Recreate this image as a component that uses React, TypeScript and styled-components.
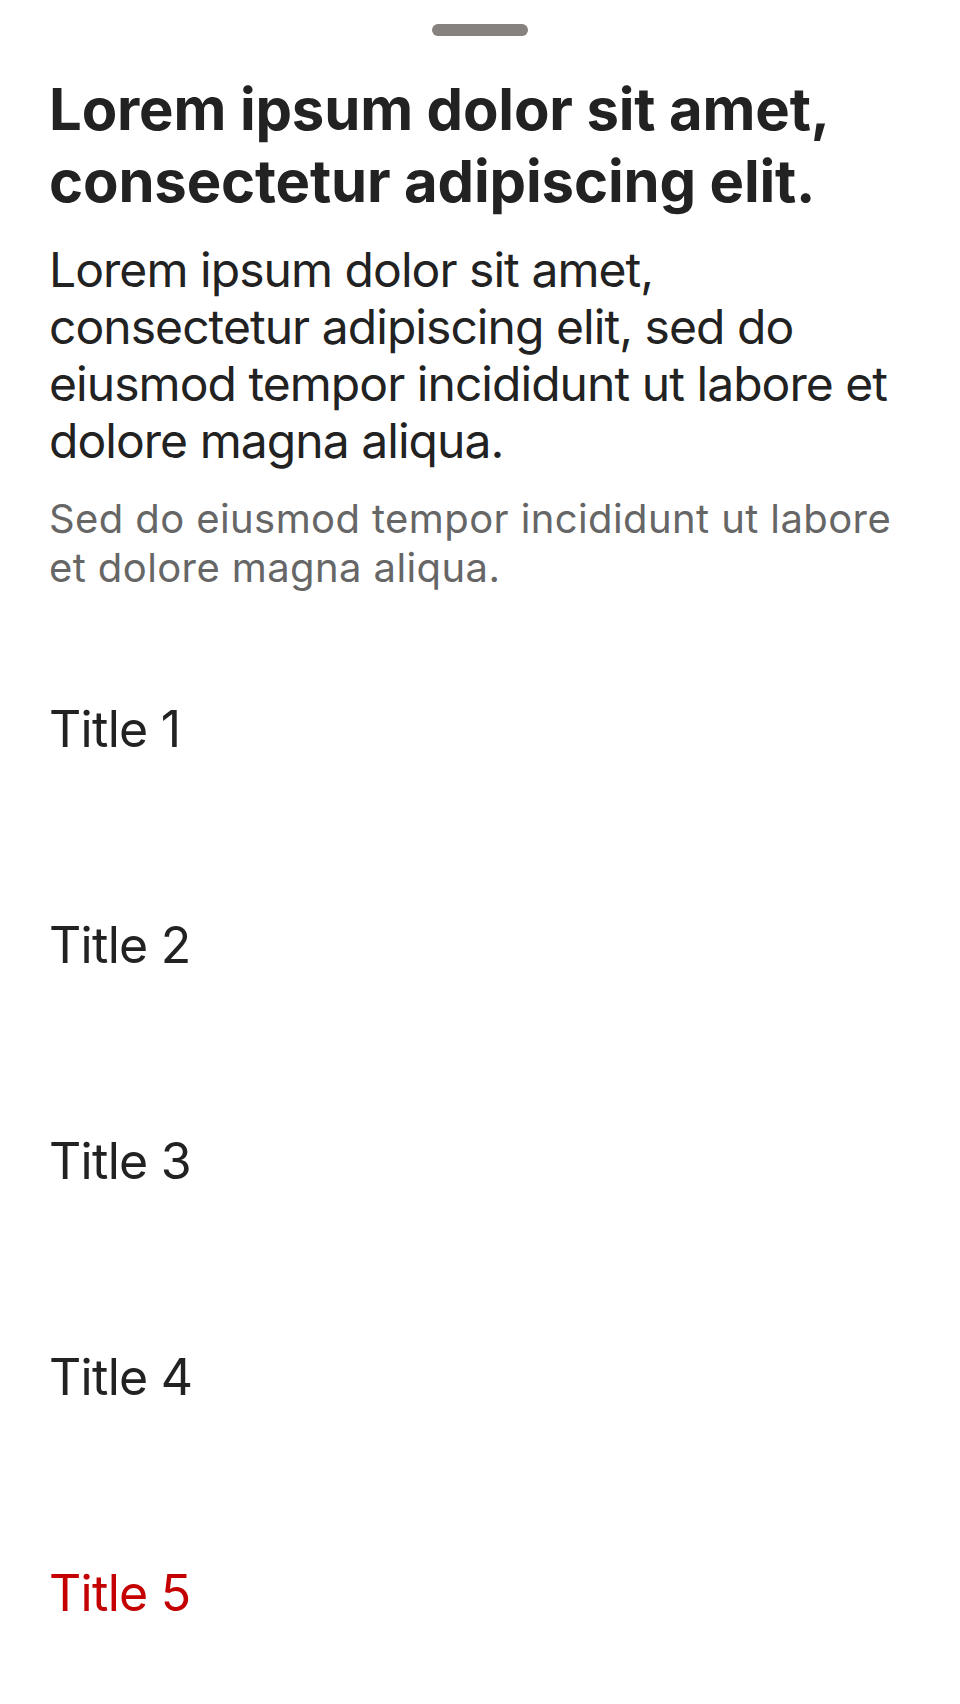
import React from "react";
import styled, { createGlobalStyle } from "styled-components";

const GlobalStyle = createGlobalStyle`
  html, body {
    margin: 0;
    padding: 0;
    background: #ffffff;
  }
  body {
    font-family: Inter, "Noto Sans", "Liberation Sans", sans-serif;
    -webkit-font-smoothing: antialiased;
  }
`;

const Sheet = styled.div`
  width: 960px;
  min-height: 1704px;
  box-sizing: border-box;
  display: flex;
  flex-direction: column;
  background: #ffffff;
  color: #222222;
`;

const HandleBar = styled.div`
  display: flex;
  justify-content: center;
  padding-top: 24px;
`;

const Handle = styled.div`
  width: 96px;
  height: 12px;
  border-radius: 6px;
  background: #85827f;
`;

const Header = styled.header`
  display: flex;
  flex-direction: column;
  padding: 37px 49px 0;
`;

const Heading = styled.h1`
  margin: 0;
  font-size: 58px;
  line-height: 72px;
  font-weight: 700;
  letter-spacing: -0.15px;
  color: #222222;
`;

const Body = styled.p`
  margin: 24px 0 0;
  font-size: 48px;
  line-height: 57px;
  font-weight: 400;
  letter-spacing: -0.95px;
  color: #222222;
`;

const Sub = styled.p`
  margin: 25px 0 0;
  font-size: 40px;
  line-height: 49px;
  font-weight: 400;
  letter-spacing: 0.4px;
  color: #666666;
`;

const List = styled.ul`
  list-style: none;
  margin: 29px 0 0;
  padding: 0;
  display: flex;
  flex-direction: column;
`;

const Row = styled.li<{ $danger?: boolean }>`
  height: 216px;
  display: flex;
  align-items: center;
  padding: 0 49px;
  font-size: 50px;
  line-height: 60px;
  font-weight: 400;
  letter-spacing: -0.7px;
  color: ${(p) => (p.$danger ? "#c40000" : "#222222")};
`;

const items = [
  { label: "Title 1" },
  { label: "Title 2" },
  { label: "Title 3" },
  { label: "Title 4" },
  { label: "Title 5", danger: true },
];

export default function App() {
  return (
    <>
      <GlobalStyle />
      <Sheet>
        <HandleBar>
          <Handle />
        </HandleBar>
        <Header>
          <Heading>Lorem ipsum dolor sit amet, consectetur adipiscing elit.</Heading>
          <Body>
            Lorem ipsum dolor sit amet, consectetur adipiscing elit, sed do eiusmod tempor incididunt ut
            labore et dolore magna aliqua.
          </Body>
          <Sub>Sed do eiusmod tempor incididunt ut labore et dolore magna aliqua.</Sub>
        </Header>
        <List>
          {items.map((it) => (
            <Row key={it.label} $danger={it.danger}>
              {it.label}
            </Row>
          ))}
        </List>
      </Sheet>
    </>
  );
}
